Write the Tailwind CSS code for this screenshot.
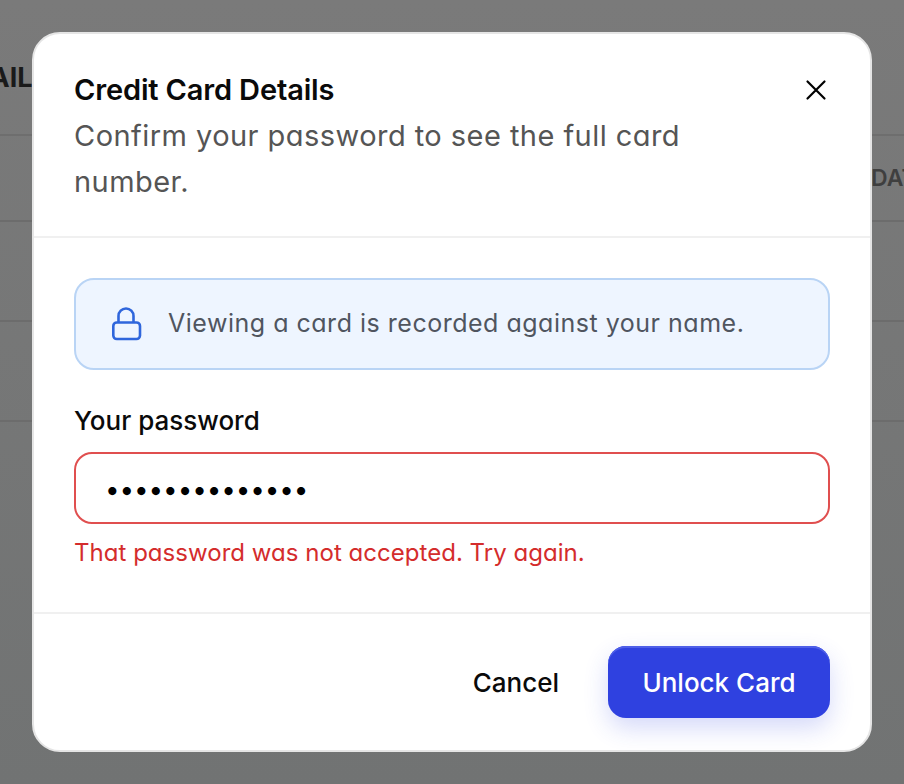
<!DOCTYPE html>
<html lang="en">
<head>
  <meta charset="UTF-8" />
  <title>Credit Card Details</title>
  <script src="https://cdn.jsdelivr.net/npm/@tailwindcss/browser@4"></script>
</head>
<body class="font-['Inter',sans-serif] overflow-hidden">
  <div class="relative h-[784px] w-[904px] overflow-hidden bg-linear-to-b from-[#7a7a7a] to-[#717373]">

    <!-- page behind the overlay -->
    <div class="flex flex-col">
      <div class="h-[136px] border-b-2 border-[#6e6e6e] pt-[60px]">
        <span class="block -ml-[62px] text-[27px] leading-9 font-bold whitespace-nowrap text-[#1a1a1a]">DETAILS</span>
      </div>
      <div class="h-[86px] border-b-2 border-[#6c6c6c] pt-[26px] pl-[871px]">
        <span class="block w-[100px] text-[23px] leading-8 font-semibold text-[#3f3f3f]">DATE</span>
      </div>
      <div class="h-[100px] border-b-2 border-[#6c6c6c]"></div>
      <div class="h-[100px] border-b-2 border-[#6c6c6c]"></div>
    </div>

    <!-- modal -->
    <div class="absolute left-8 top-8 flex h-[720px] w-[840px] flex-col rounded-[28px] border-2 border-[#e5e5e5] bg-white">
      <div class="flex h-[204px] items-start justify-between border-b-2 border-[#f0f0f0] pl-10 pr-[42px] pt-[36px]">
        <div class="w-[640px]">
          <h2 class="text-[29px] leading-[40px] font-semibold tracking-[-0.15px] text-[#0a0a0a]">Credit Card Details</h2>
          <p class="mt-[3px] text-[29px] leading-[46px] tracking-[0.45px] text-[#555555] [font-feature-settings:'cv11']">Confirm your password to see the full card number.</p>
        </div>
        <button class="mt-2 text-black">
          <svg class="h-6 w-6" viewBox="0 0 24 24" fill="none" stroke="currentColor" stroke-width="2.2" stroke-linecap="round"><path d="M3.5 3.5 L20.5 20.5 M20.5 3.5 L3.5 20.5"/></svg>
        </button>
      </div>

      <div class="flex flex-1 flex-col px-10 pt-10">
        <div class="flex h-[92px] items-center gap-[26px] rounded-[20px] border-2 border-[#b9d4f5] bg-[#eef5ff] pl-[34px]">
          <svg class="h-[34px] w-8 text-[#2f66dc]" viewBox="0 0 32 34" fill="none" stroke="currentColor" stroke-width="2.6" stroke-linejoin="round"><rect x="3.3" y="15.5" width="26.7" height="16.5" rx="3.5"/><path d="M8.5 15.5 V9 a7.5 7.5 0 0 1 15 0 V15.5"/></svg>
          <span class="text-[25px] tracking-[0.51px] text-[#50555f] [font-feature-settings:'cv11']">Viewing a card is recorded against your name.</span>
        </div>
        <label class="mt-[33px] block text-[26px] leading-9 font-medium text-[#0a0a0a]">Your password</label>
        <input type="password" value="aaaaaaaaaaaaaa" class="mt-[13px] block h-[72px] w-full rounded-[18px] border-2 border-[#e04f4f] bg-white pl-[29px] pt-[2px] text-[26px] tracking-[-0.1px] text-black outline-none" />
        <p class="mt-[11px] text-[24px] leading-9 tracking-[0.03px] text-[#d42c2c] [font-feature-settings:'cv11']">That password was not accepted. Try again.</p>
      </div>

      <div class="flex h-[138px] items-start justify-end border-t-2 border-[#f0f0f0] pr-10 pt-8">
        <button class="mr-[49px] h-[72px] text-[26px] font-medium text-[#0a0a0a]">Cancel</button>
        <button class="h-[72px] w-[222px] rounded-[18px] bg-[#2f41e0] text-[26px] font-medium text-white shadow-[inset_0_2px_0_#4e5fe8,0_10px_24px_rgba(47,65,224,0.2)]">Unlock Card</button>
      </div>
    </div>
  </div>
</body>
</html>
